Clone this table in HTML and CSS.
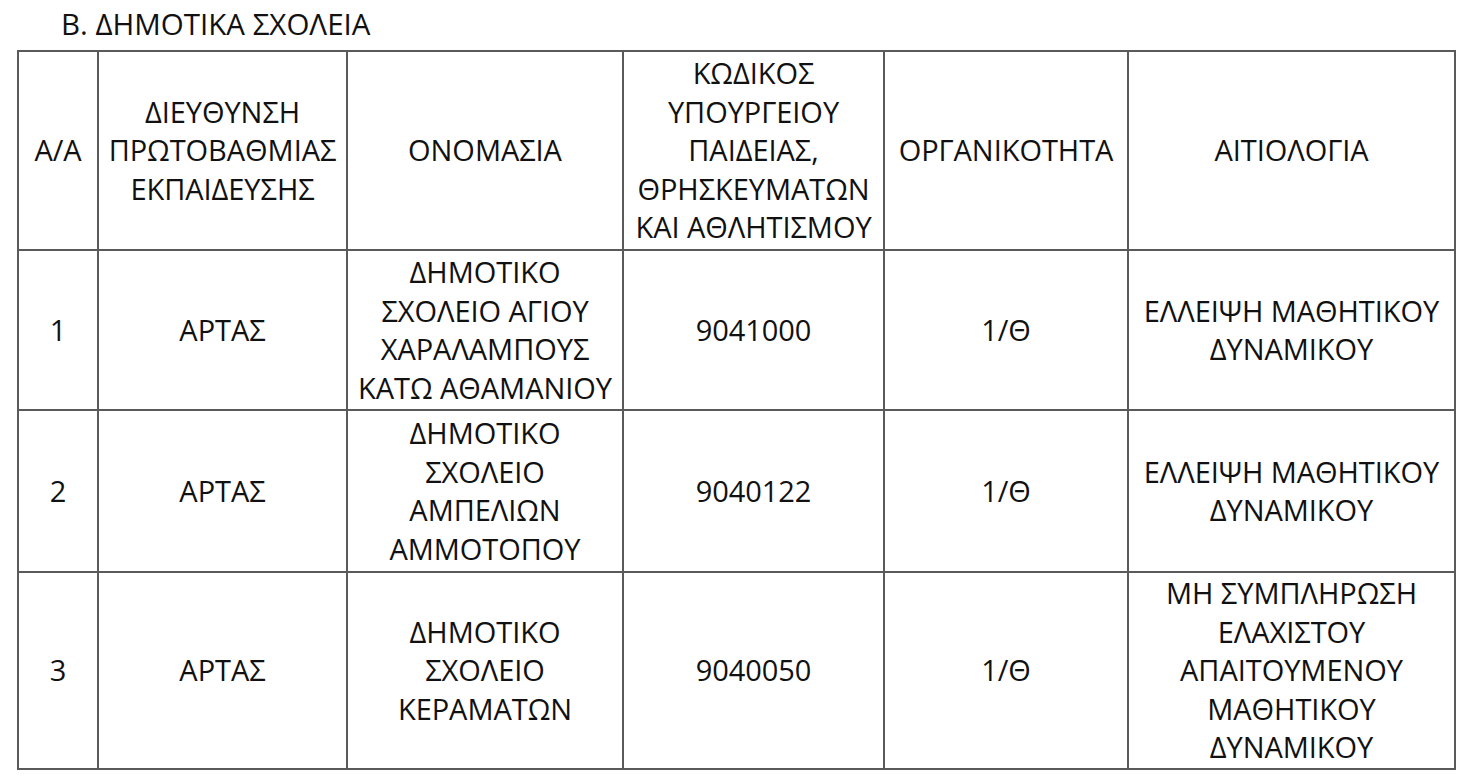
FILE: index.html
```html
<!DOCTYPE html>
<html lang="el">
<head>
<meta charset="utf-8">
<title>Β. ΔΗΜΟΤΙΚΑ ΣΧΟΛΕΙΑ</title>
<link rel="stylesheet" href="styles.css">
</head>
<body>
<div class="page">
  <h1 class="title">Β. ΔΗΜΟΤΙΚΑ ΣΧΟΛΕΙΑ</h1>
  <table class="schools">
    <colgroup>
      <col class="c-aa">
      <col class="c-dir">
      <col class="c-name">
      <col class="c-code">
      <col class="c-org">
      <col class="c-reason">
    </colgroup>
    <thead>
      <tr class="row-head">
        <th>Α/Α</th>
        <th>ΔΙΕΥΘΥΝΣΗ<br>ΠΡΩΤΟΒΑΘΜΙΑΣ<br>ΕΚΠΑΙΔΕΥΣΗΣ</th>
        <th>ΟΝΟΜΑΣΙΑ</th>
        <th>ΚΩΔΙΚΟΣ<br>ΥΠΟΥΡΓΕΙΟΥ<br>ΠΑΙΔΕΙΑΣ,<br>ΘΡΗΣΚΕΥΜΑΤΩΝ<br>ΚΑΙ ΑΘΛΗΤΙΣΜΟΥ</th>
        <th>ΟΡΓΑΝΙΚΟΤΗΤΑ</th>
        <th>ΑΙΤΙΟΛΟΓΙΑ</th>
      </tr>
    </thead>
    <tbody>
      <tr class="row-1">
        <td>1</td>
        <td>ΑΡΤΑΣ</td>
        <td>ΔΗΜΟΤΙΚΟ<br>ΣΧΟΛΕΙΟ ΑΓΙΟΥ<br>ΧΑΡΑΛΑΜΠΟΥΣ<br>ΚΑΤΩ ΑΘΑΜΑΝΙΟΥ</td>
        <td>9041000</td>
        <td>1/Θ</td>
        <td>ΕΛΛΕΙΨΗ ΜΑΘΗΤΙΚΟΥ<br>ΔΥΝΑΜΙΚΟΥ</td>
      </tr>
      <tr class="row-2">
        <td>2</td>
        <td>ΑΡΤΑΣ</td>
        <td>ΔΗΜΟΤΙΚΟ<br>ΣΧΟΛΕΙΟ<br>ΑΜΠΕΛΙΩΝ<br>ΑΜΜΟΤΟΠΟΥ</td>
        <td>9040122</td>
        <td>1/Θ</td>
        <td>ΕΛΛΕΙΨΗ ΜΑΘΗΤΙΚΟΥ<br>ΔΥΝΑΜΙΚΟΥ</td>
      </tr>
      <tr class="row-3">
        <td>3</td>
        <td>ΑΡΤΑΣ</td>
        <td>ΔΗΜΟΤΙΚΟ<br>ΣΧΟΛΕΙΟ<br>ΚΕΡΑΜΑΤΩΝ</td>
        <td>9040050</td>
        <td>1/Θ</td>
        <td>ΜΗ ΣΥΜΠΛΗΡΩΣΗ<br>ΕΛΑΧΙΣΤΟΥ<br>ΑΠΑΙΤΟΥΜΕΝΟΥ<br>ΜΑΘΗΤΙΚΟΥ<br>ΔΥΝΑΜΙΚΟΥ</td>
      </tr>
    </tbody>
  </table>
</div>
</body>
</html>
```

FILE: styles.css
```css
html, body {
  margin: 0;
  padding: 0;
  background: #ffffff;
}

.page {
  padding: 7px 0 0 17px;
  font-family: "Open Sans", "Noto Sans", "Liberation Sans", sans-serif;
  color: #111111;
}

.title {
  margin: 0 0 0 44px;
  font-size: 29.5px;
  font-weight: 400;
  line-height: 34px;
  letter-spacing: 0;
}

.schools {
  margin-top: 9px;
  border-collapse: collapse;
  table-layout: fixed;
  width: 1437px;
  font-size: 29px;
  line-height: 38.5px;
  letter-spacing: -0.05px;
}

.schools th,
.schools td {
  border: 2px solid #5a5a5a;
  padding: 0;
  text-align: center;
  vertical-align: middle;
  font-weight: 400;
  white-space: nowrap;
}

.c-aa { width: 80px; }
.c-dir { width: 249px; }
.c-name { width: 276px; }
.c-code { width: 261px; }
.c-org { width: 244px; }
.c-reason { width: 327px; }

.row-head { height: 199px; }
.row-1 { height: 160px; }
.row-2 { height: 162px; }
.row-3 { height: 197px; }
```
